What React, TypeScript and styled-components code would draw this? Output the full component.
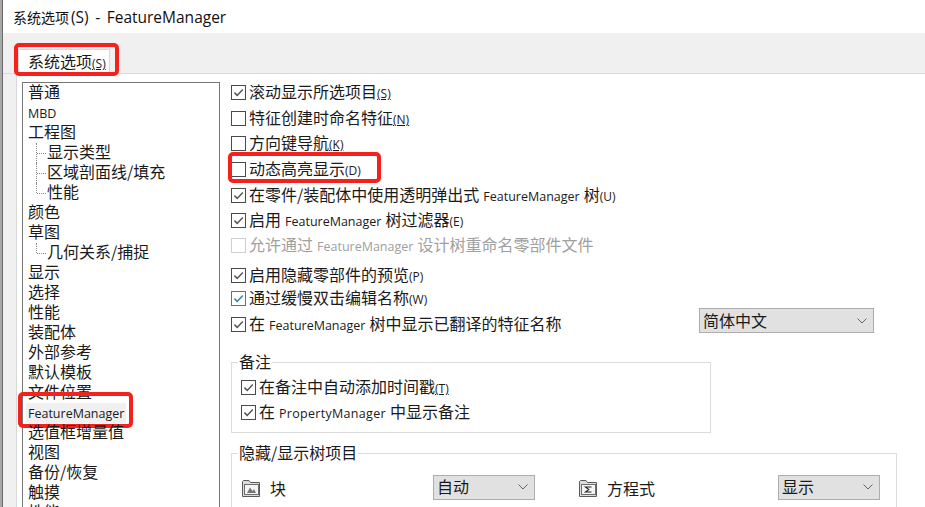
import React from "react";
import styled, { createGlobalStyle } from "styled-components";

const GlobalStyle = createGlobalStyle`
	html, body {
		margin: 0;
		padding: 0;
		height: 100%;
		overflow: hidden;
		background: #fff;
	}
	body {
		font-family: "Noto Sans CJK SC", "Open Sans", sans-serif;
		font-size: 16px;
		color: #1a1a1a;
	}
`;

const Dialog = styled.div`
	width: 925px;
	height: 507px;
	overflow: hidden;
	box-sizing: border-box;
	padding-left: 3px;
	background: linear-gradient(to right, #a8a8a8 0 2px, #6a6a6a 2px 3px, #fff 3px);
`;

const TitleBar = styled.div`
	height: 33px;
	padding-left: 10px;
	display: flex;
	align-items: center;
	font-size: 14px;
	color: #111;
	white-space: pre;
	span {
		font-family: "Open Sans", sans-serif;
		font-size: 15.5px;
		word-spacing: 2.5px;
		margin-left: 2px;
	}
`;

const TabStrip = styled.div`
	height: 41px;
	background: #f0f0f0;
	box-sizing: border-box;
	padding: 16px 0 0 15px;
	border-bottom: 1px solid #d9d9d9;
`;

const Tab = styled.div`
	position: relative;
	width: 92px;
	height: 25px;
	box-sizing: border-box;
	background: #fff;
	border: 1px solid #d9d9d9;
	border-bottom: none;
	padding-left: 9px;
	line-height: 22px;
	white-space: nowrap;
`;

const Mnemonic = styled.span<{ $underline?: boolean }>`
	font-family: "Open Sans", sans-serif;
	font-size: 12px;
	text-decoration: ${(p) => (p.$underline ? "underline" : "none")};
`;

const Highlight = styled.div<{ $t: number; $l: number; $w: number; $h: number }>`
	position: absolute;
	top: ${(p) => p.$t}px;
	left: ${(p) => p.$l}px;
	width: ${(p) => p.$w}px;
	height: ${(p) => p.$h}px;
	box-sizing: border-box;
	border: 4px solid #f5211c;
	border-radius: 5px;
	pointer-events: none;
`;

const Main = styled.div`
	background: #f0f0f0;
	padding-left: 13px;
	height: 433px;
`;

const Body = styled.div`
	display: flex;
	align-items: flex-start;
	height: 433px;
	box-sizing: border-box;
	background: #fff;
	border-left: 1px solid #d9d9d9;
	padding: 8px 0 0 5px;
`;

const Tree = styled.div`
	flex: none;
	width: 198px;
	height: 440px;
	box-sizing: border-box;
	border: 1px solid #767676;
	margin-right: 11px;
`;

const TreeRow = styled.div<{ $child?: boolean; $latin?: boolean }>`
	position: relative;
	height: 20px;
	line-height: 16px;
	white-space: nowrap;
	padding-left: ${(p) => (p.$child ? 24 : 5)}px;
	${(p) => p.$latin && `font-family: "Open Sans", sans-serif; font-size: 12.5px; line-height: 21px;`}
`;

const TreeLines = styled.i<{ $last?: boolean }>`
	position: absolute;
	left: 13px;
	top: 0;
	height: ${(p) => (p.$last ? 10 : 20)}px;
	width: 9px;
	border-left: 1px dotted #888;
	&::after {
		content: "";
		position: absolute;
		left: 0;
		top: 10px;
		width: 9px;
		border-top: 1px dotted #888;
	}
`;

const Selected = styled.span`
	display: block;
	width: 100px;
	height: 20px;
	margin-left: -2px;
	padding-left: 2px;
	box-sizing: border-box;
	background: #f0f0f0;
`;

const Options = styled.div`
	flex: none;
	width: 680px;
`;

const Check = styled.div<{ $gap: number; $off?: boolean }>`
	position: relative;
	display: flex;
	align-items: center;
	height: 20px;
	margin-top: ${(p) => p.$gap}px;
	gap: 3px;
	white-space: nowrap;
	color: ${(p) => (p.$off ? "#a0a0a0" : "#1a1a1a")};
`;

const CheckLabel = styled.span`
	padding-bottom: 2px;
`;

const Box = styled.span<{ $off?: boolean; $blue?: boolean }>`
	flex: none;
	width: 15px;
	height: 15px;
	box-sizing: border-box;
	border: 1px solid ${(p) => (p.$blue ? "#2b7fc4" : p.$off ? "#cfcfcf" : "#4a4a4a")};
	display: flex;
	svg {
		width: 13px;
		height: 13px;
	}
`;

const Latin = styled.span<{ $wide?: boolean }>`
	font-family: "Open Sans", sans-serif;
	font-size: 12.5px;
	margin: 0 4px;
	letter-spacing: ${(p) => (p.$wide ? "0.3px" : "0")};
`;

const Fieldset = styled.div<{ $w: number; $h: number; $gap: number }>`
	position: relative;
	width: ${(p) => p.$w}px;
	height: ${(p) => p.$h}px;
	margin-top: ${(p) => p.$gap}px;
	box-sizing: border-box;
	border: 1px solid #dcdcdc;
`;

const Legend = styled.div`
	position: absolute;
	top: -12px;
	left: 6px;
	padding: 0 1px;
	background: #fff;
	line-height: 20px;
`;

const FieldBody = styled.div`
	padding: 5px 0 0 9px;
`;

const Select = styled.div<{ $w: number }>`
	flex: none;
	width: ${(p) => p.$w}px;
	height: 25px;
	box-sizing: border-box;
	background: #e1e1e1;
	border: 1px solid #adadad;
	display: flex;
	align-items: center;
	justify-content: space-between;
	padding: 0 6px 0 3px;
	line-height: 19px;
	span {
		padding-bottom: 1px;
	}
	svg {
		width: 10px;
		height: 6px;
	}
`;

const SplitRow = styled.div`
	display: flex;
	align-items: flex-start;
	justify-content: space-between;
	width: 643px;
`;

const TreeItemRow = styled.div`
	display: grid;
	grid-template-columns: 191px 146px 199px 102px;
	align-items: center;
	padding: 20px 0 0 10px;
`;

const Labelled = styled.div`
	display: flex;
	align-items: center;
	gap: 9px;
	padding-top: 2px;
	svg {
		width: 19px;
		height: 19px;
	}
`;

const Tick = ({ color = "#555" }: { color?: string }) => (
	<svg viewBox="0 0 13 13" fill="none">
		<path d="M2.4 6.6 L5.2 9.4 L10.8 3.4" stroke={color} strokeWidth="1.5" />
	</svg>
);

const Chevron = () => (
	<svg viewBox="0 0 10 6" fill="none">
		<path d="M0.5 0.5 L5 5 L9.5 0.5" stroke="#666" strokeWidth="1" />
	</svg>
);

const Folder = ({ children }: { children: React.ReactNode }) => (
	<svg viewBox="0 0 19 19" fill="none">
		<path d="M0.5 17.5 V2.5 L1.5 1.5 H7 L8.5 3.5 H17.5 V17.5 Z" fill="#dcdcdc" stroke="#5a5a5a" />
		<rect x="2.5" y="5.5" width="14" height="10" fill="#f4f4f4" stroke="#6e6e6e" />
		{children}
	</svg>
);

const treeItems: { text: string; child?: boolean; latin?: boolean; last?: boolean }[] = [
	{ text: "普通" },
	{ text: "MBD", latin: true },
	{ text: "工程图" },
	{ text: "显示类型", child: true },
	{ text: "区域剖面线/填充", child: true },
	{ text: "性能", child: true, last: true },
	{ text: "颜色" },
	{ text: "草图" },
	{ text: "几何关系/捕捉", child: true, last: true },
	{ text: "显示" },
	{ text: "选择" },
	{ text: "性能" },
	{ text: "装配体" },
	{ text: "外部参考" },
	{ text: "默认模板" },
	{ text: "文件位置" },
];

const treeItemsAfter = ["选值框增量值", "视图", "备份/恢复", "触摸", "性能"];

export default function App() {
	return (
		<Dialog>
			<GlobalStyle />
			<TitleBar>
				系统选项<span>(S) - FeatureManager</span>
			</TitleBar>
			<TabStrip>
				<Tab>
					系统选项<Mnemonic $underline>(S)</Mnemonic>
					<Highlight $t={-7} $l={-5} $w={105} $h={33} />
				</Tab>
			</TabStrip>
			<Main>
				<Body>
					<Tree>
						{treeItems.map((item) => (
							<TreeRow key={item.text + item.child} $child={item.child} $latin={item.latin}>
								{item.child && <TreeLines $last={item.last} />}
								{item.text}
							</TreeRow>
						))}
						<TreeRow $latin>
							<Selected>FeatureManager</Selected>
							<Highlight $t={-11} $l={-5} $w={115} $h={36} />
						</TreeRow>
						{treeItemsAfter.map((text) => (
							<TreeRow key={text}>{text}</TreeRow>
						))}
					</Tree>
					<Options>
						<Check $gap={0}>
							<Box><Tick /></Box>
							<CheckLabel>滚动显示所选项目<Mnemonic $underline>(S)</Mnemonic></CheckLabel>
						</Check>
						<Check $gap={6}>
							<Box />
							<CheckLabel>特征创建时命名特征<Mnemonic $underline>(N)</Mnemonic></CheckLabel>
						</Check>
						<Check $gap={5}>
							<Box />
							<CheckLabel>方向键导航<Mnemonic $underline>(K)</Mnemonic></CheckLabel>
						</Check>
						<Check $gap={6}>
							<Box />
							<CheckLabel>动态高亮显示<Mnemonic>(D)</Mnemonic></CheckLabel>
							<Highlight $t={-7} $l={-3} $w={153} $h={31} />
						</Check>
						<Check $gap={6}>
							<Box><Tick /></Box>
							<CheckLabel>在零件/装配体中使用透明弹出式<Latin>FeatureManager</Latin>树<Mnemonic>(U)</Mnemonic></CheckLabel>
						</Check>
						<Check $gap={5}>
							<Box><Tick /></Box>
							<CheckLabel>启用<Latin>FeatureManager</Latin>树过滤器<Mnemonic>(E)</Mnemonic></CheckLabel>
						</Check>
						<Check $gap={5} $off>
							<Box $off />
							<CheckLabel>允许通过<Latin>FeatureManager</Latin>设计树重命名零部件文件</CheckLabel>
						</Check>
						<Check $gap={10}>
							<Box><Tick /></Box>
							<CheckLabel>启用隐藏零部件的预览<Mnemonic>(P)</Mnemonic></CheckLabel>
						</Check>
						<Check $gap={3}>
							<Box $blue><Tick color="#2b7fc4" /></Box>
							<CheckLabel>通过缓慢双击编辑名称<Mnemonic>(W)</Mnemonic></CheckLabel>
						</Check>
						<SplitRow>
							<Check $gap={6}>
								<Box><Tick /></Box>
								<CheckLabel>在<Latin>FeatureManager</Latin>树中显示已翻译的特征名称</CheckLabel>
							</Check>
							<Select $w={175}><span>简体中文</span><Chevron /></Select>
						</SplitRow>
						<Fieldset $w={480} $h={71} $gap={28}>
							<Legend>备注</Legend>
							<FieldBody>
								<Check $gap={9}>
									<Box><Tick /></Box>
									<CheckLabel>在备注中自动添加时间戳<Mnemonic $underline>(T)</Mnemonic></CheckLabel>
								</Check>
								<Check $gap={5}>
									<Box><Tick /></Box>
									<CheckLabel>在<Latin $wide>PropertyManager</Latin>中显示备注</CheckLabel>
								</Check>
							</FieldBody>
						</Fieldset>
						<Fieldset $w={666} $h={80} $gap={20}>
							<Legend>隐藏/显示树项目</Legend>
							<TreeItemRow>
								<Labelled>
									<Folder>
										<path d="M5 14 L8 8.5 L10.5 12 L12 10 L14 14 Z" fill="#777" />
									</Folder>
									块
								</Labelled>
								<Select $w={102}><span>自动</span><Chevron /></Select>
								<Labelled>
									<Folder>
										<path d="M12.5 8 H6.5 L9.8 10.5 L6.5 13 H12.5" stroke="#222" strokeWidth="1.1" />
									</Folder>
									方程式
								</Labelled>
								<Select $w={102}><span>显示</span><Chevron /></Select>
							</TreeItemRow>
						</Fieldset>
					</Options>
				</Body>
			</Main>
		</Dialog>
	);
}
